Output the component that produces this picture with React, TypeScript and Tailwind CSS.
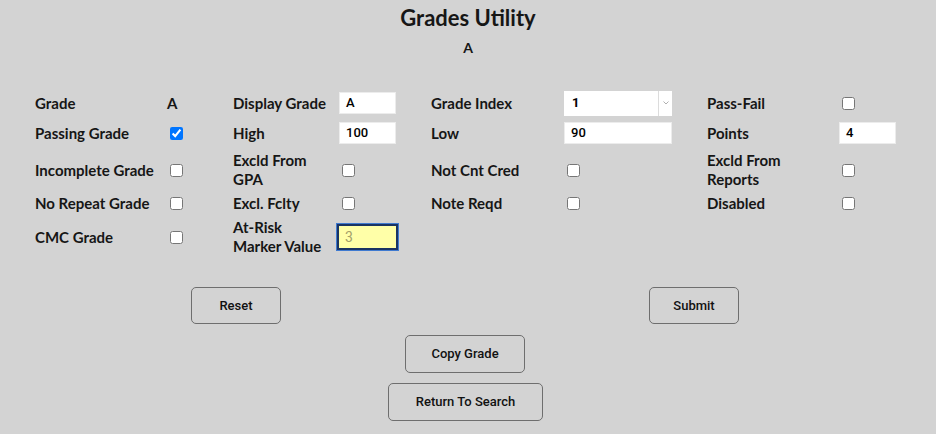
import React from 'react'

const label = "text-[15px] font-bold leading-[19px] text-[#161616]"
const box = "h-[22px] bg-white border border-[#ececec] pl-[6px] flex items-center text-[13px] font-medium text-black"

function Check({ checked = false }: { checked?: boolean }) {
  return <input type="checkbox" defaultChecked={checked} className="ml-[3px] w-[13px] h-[13px]" />
}

function TextBox({ value, w = "w-[57px]" }: { value: string; w?: string }) {
  return <div className={`${box} ${w}`} style={{ fontFamily: 'Roboto, "Liberation Sans", sans-serif' }}>{value}</div>
}

function Btn({ children, w }: { children: React.ReactNode; w: string }) {
  return (
    <button
      className={`${w} border border-[#6e6e6e] rounded-[5px] text-[13px] font-medium text-[#111]`}
      style={{ fontFamily: 'Roboto, "Liberation Sans", sans-serif' }}
    >
      {children}
    </button>
  )
}

export default function App() {
  return (
    <div className="w-[936px] h-[434px] bg-[#d3d3d3] overflow-hidden" style={{ fontFamily: 'Lato, "Open Sans", sans-serif' }}>
      <div className="pt-[4px] flex flex-col items-center">
        <h1 className="text-[22px] leading-[28px] font-bold text-[#161616]">Grades Utility</h1>
        <p className="mt-[6px] text-[14px] leading-[20px] font-bold text-[#161616]">A</p>
      </div>

      <div className="mt-[30px] pl-[35px] grid grid-cols-[132px_66px_106px_92px_133px_143px_132px_80px] grid-rows-[30px_30px_44px_22px_46px] items-center">
        {/* row 1 */}
        <span className={label}>Grade</span>
        <span className={label}>A</span>
        <span className={label}>Display Grade</span>
        <TextBox value="A" />
        <span className={label}>Grade Index</span>
        <div className="w-[108px] h-[25px] bg-white flex items-center" style={{ fontFamily: 'Roboto, "Liberation Sans", sans-serif' }}>
          <span className="flex-1 pl-[8px] text-[13px] font-bold text-black">1</span>
          <div className="w-px h-full bg-[#dcdcdc]" />
          <div className="w-[13px] flex justify-center">
            <svg width="6" height="4" viewBox="0 0 6 4"><path d="M0.5 0.5 L3 3 L5.5 0.5" fill="none" stroke="#b0b0b0" strokeWidth="1" /></svg>
          </div>
        </div>
        <span className={label}>Pass-Fail</span>
        <Check />

        {/* row 2 */}
        <span className={label}>Passing Grade</span>
        <Check checked />
        <span className={label}>High</span>
        <TextBox value="100" />
        <span className={label}>Low</span>
        <TextBox value="90" w="w-[108px]" />
        <span className={label}>Points</span>
        <TextBox value="4" />

        {/* row 3 */}
        <span className={label}>Incomplete Grade</span>
        <Check />
        <span className={label}>Excld From<br />GPA</span>
        <Check />
        <span className={label}>Not Cnt Cred</span>
        <Check />
        <span className={label}>Excld From<br />Reports</span>
        <Check />

        {/* row 4 */}
        <span className={label}>No Repeat Grade</span>
        <Check />
        <span className={label}>Excl. Fclty</span>
        <Check />
        <span className={label}>Note Reqd</span>
        <Check />
        <span className={label}>Disabled</span>
        <Check />

        {/* row 5 */}
        <span className={label}>CMC Grade</span>
        <Check />
        <span className={label}>At-Risk<br />Marker Value</span>
        <div
          className="-ml-[2px] w-[61px] h-[26px] bg-[#ffffa8] border-2 border-[#1a3463] outline outline-1 outline-[#3f7ad0] pl-[6px] flex items-center text-[14px] text-[#a3a06a]"
          style={{ fontFamily: 'Roboto, "Liberation Sans", sans-serif' }}
        >
          3
        </div>
        <span />
        <span />
        <span />
        <span />
      </div>

      <div className="mt-[27px] pl-[191px] pr-[197px] flex justify-between h-[37px]">
        <Btn w="w-[90px]">Reset</Btn>
        <Btn w="w-[90px]">Submit</Btn>
      </div>
      <div className="mt-[11px] pr-[6px] flex justify-center h-[38px]">
        <Btn w="w-[120px]">Copy Grade</Btn>
      </div>
      <div className="mt-[10px] pr-[5px] flex justify-center h-[38px]">
        <Btn w="w-[155px]">Return To Search</Btn>
      </div>
    </div>
  )
}
